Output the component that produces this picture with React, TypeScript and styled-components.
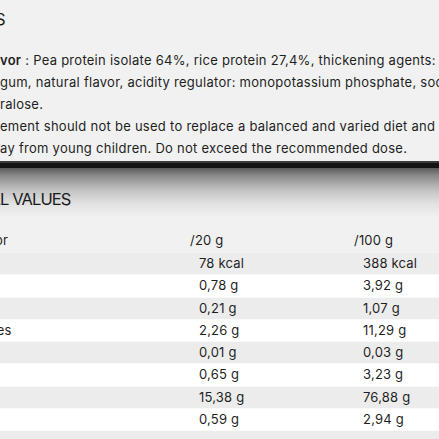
import styled, { createGlobalStyle } from "styled-components";

const GlobalStyle = createGlobalStyle`
  html, body {
    margin: 0;
    padding: 0;
    background: #f1f1f1;
    overflow: hidden;
  }
  body {
    font-family: Inter, "Liberation Sans", sans-serif;
    color: #1f1f1f;
  }
`;

const Page = styled.div`
  width: 439px;
  height: 439px;
  overflow: hidden;
  background: #f1f1f1;
`;

const Ingredients = styled.section`
  padding-top: 8px;
`;

const Heading = styled.h2<{ $shift?: number }>`
  margin: 0 0 0 ${({ $shift }) => $shift ?? 0}px;
  font-size: 16.5px;
  font-weight: 400;
  line-height: 22px;
  letter-spacing: -0.9px;
  text-transform: uppercase;
  white-space: nowrap;
  color: #1b1b1b;
`;

const Text = styled.div`
  margin-top: 19px;
  font-size: 13px;
  line-height: 22px;
  letter-spacing: 0.27px;
  white-space: nowrap;
`;

const Line = styled.div``;

const Strong = styled.b`
  font-weight: 600;
`;

// hidden lead of a word, pushed off the left edge
const Cut = styled.span`
  display: inline-block;
  width: 0;
  direction: rtl;
  white-space: nowrap;
`;

const Nutrition = styled.section`
  margin-top: 4px;
  border-top: 5px solid #141414;
  box-shadow: 0 -2px 0 #3a3a3a;
  background: linear-gradient(
    #5a5a5a 0px,
    #8c8c8c 8px,
    #c2c2c2 22px,
    #e2e2e2 36px,
    #f1f1f1 50px
  );
  padding-top: 20px;
`;

const Table = styled.div`
  margin-top: 19px;
  margin-left: -82px;
  font-size: 13px;
  letter-spacing: 0.2px;
`;

const Row = styled.div<{ $shade?: "gray" | "white" | "none" }>`
  display: grid;
  grid-template-columns: 272px 164px 1fr;
  height: 21.25px;
  line-height: 21.25px;
  border-bottom: 1px solid #fafafa;
  background: ${({ $shade }) =>
    $shade === "gray" ? "#ececec" : $shade === "white" ? "#ffffff" : "transparent"};
`;

const Head = styled(Row)`
  border-bottom: none;
  height: 24px;
  line-height: 22px;
`;

const Label = styled.span`
  white-space: nowrap;
`;

const Cell = styled.span<{ $head?: boolean }>`
  padding-left: ${({ $head }) => ($head ? 0 : 9)}px;
  white-space: nowrap;
`;

const rows = [
  ["Energy", "78 kcal", "388 kcal"],
  ["Fat", "0,78 g", "3,92 g"],
  ["Saturates", "0,21 g", "1,07 g"],
  ["Carbohydrates", "2,26 g", "11,29 g"],
  ["Sugars", "0,01 g", "0,03 g"],
  ["Fibre", "0,65 g", "3,23 g"],
  ["Protein", "15,38 g", "76,88 g"],
  ["Salt", "0,59 g", "2,94 g"],
];

export default function App() {
  return (
    <Page>
      <GlobalStyle />
      <Ingredients>
        <Heading $shift={-5}>
          <Cut>Ingredient</Cut>s
        </Heading>
        <Text>
          <Line>
            <Strong>
              <Cut>Fla</Cut>vor
            </Strong>{" "}
            : Pea protein isolate 64%, rice protein 27,4%, thickening agents: guar
          </Line>
          <Line>gum, natural flavor, acidity regulator: monopotassium phosphate, sodium chloride, sweetener:</Line>
          <Line>
            <Cut>suc</Cut>ralose.
          </Line>
          <Line>
            <Cut>This suppl</Cut>ement should not be used to replace a balanced and varied diet and a healthy
          </Line>
          <Line>
            <Cut>Keep aw</Cut>ay from young children. Do not exceed the recommended dose.
          </Line>
        </Text>
      </Ingredients>

      <Nutrition>
        <Heading>
          <Cut>Nutritiona</Cut>l values
        </Heading>
        <Table>
          <Head>
            <Label>Main value for</Label>
            <Cell $head>/20 g</Cell>
            <Cell $head>/100 g</Cell>
          </Head>
          {rows.map(([name, per20, per100], i) => (
            <Row key={name} $shade={i % 2 === 0 ? "gray" : "white"}>
              <Label>{name}</Label>
              <Cell>{per20}</Cell>
              <Cell>{per100}</Cell>
            </Row>
          ))}
          <Row $shade="gray" />
        </Table>
      </Nutrition>
    </Page>
  );
}
